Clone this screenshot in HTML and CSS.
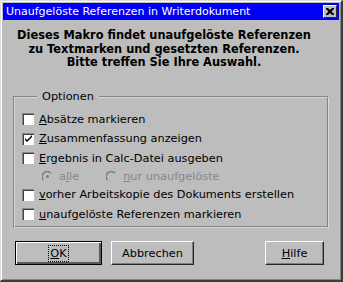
FILE: index.html
```html
<!DOCTYPE html>
<html lang="de">

<head>
    <meta charset="UTF-8">
    <title>Unaufgelöste Referenzen in Writerdokument</title>
    <link rel="stylesheet" href="styles.css">
</head>

<body>

    <div class="fenster">
        <div class="titelleiste">
            <span class="titel">Unaufgelöste Referenzen in Writerdokument</span>
            <span class="schliessen">
                <svg width="8" height="7" viewBox="0 0 8 7">
                    <path d="M0 0h2l2 2 2-2h2v1l-2.5 2.5L8 6v1H6L4 5 2 7H0V6l2.5-2.5L0 1z" fill="#000"/>
                </svg>
            </span>
        </div>

        <p class="hinweis">Dieses Makro findet unaufgelöste Referenzen<br>zu Textmarken und gesetzten Referenzen.<br>Bitte treffen Sie Ihre Auswahl.</p>

        <fieldset class="optionen">
            <legend>Optionen</legend>

            <div class="zeile">
                <span class="kasten"></span>
                <span><u>A</u>bsätze markieren</span>
            </div>
            <div class="zeile">
                <span class="kasten">
                    <svg width="8" height="8" viewBox="0 0 8 8">
                        <path d="M0 3l2 2 5-5v2L2 7 0 5z" fill="#000"/>
                    </svg>
                </span>
                <span><u>Z</u>usammenfassung anzeigen</span>
            </div>
            <div class="zeile">
                <span class="kasten"></span>
                <span><u>E</u>rgebnis in Calc-Datei ausgeben</span>
            </div>
            <div class="zeile radios">
                <span class="radio">
                    <svg width="11" height="11" viewBox="0 0 11 11">
                        <path d="M9 2.2A5 5 0 0 0 1.5 9" fill="none" stroke="#7e7e7e" stroke-width="1.5"/>
                        <circle cx="5.5" cy="5.5" r="1.5" fill="#7e7e7e"/>
                    </svg>
                </span>
                <span class="aus">a<u>l</u>le</span>
                <span class="radio zweite">
                    <svg width="11" height="11" viewBox="0 0 11 11">
                        <path d="M9 2.2A5 5 0 0 0 1.5 9" fill="none" stroke="#7e7e7e" stroke-width="1.5"/>
                    </svg>
                </span>
                <span class="aus"><u>n</u>ur unaufgelöste</span>
            </div>
            <div class="zeile">
                <span class="kasten"></span>
                <span><u>v</u>orher Arbeitskopie des Dokuments erstellen</span>
            </div>
            <div class="zeile">
                <span class="kasten"></span>
                <span><u>u</u>naufgelöste Referenzen markieren</span>
            </div>
        </fieldset>

        <div class="knoepfe">
            <button class="knopf standard"><span class="fokus"><u>O</u>K</span></button>
            <button class="knopf abbrechen">Abbrechen</button>
            <button class="knopf hilfe"><u>H</u>ilfe</button>
        </div>
    </div>

</body>

</html>
```

FILE: styles.css
```css
body {
    margin: 0;
    background-color: #bdbdbd;
}

.fenster {
    box-sizing: border-box;
    width: 343px;
    height: 282px;
    border-top: 1px solid #dcdcdc;
    border-left: 1px solid #dcdcdc;
    border-right: 2px solid #3c3c3c;
    border-bottom: 2px solid #3c3c3c;
    box-shadow: inset 1px 1px 0 #fff, inset -1px -1px 0 #858585;
    background-color: #bdbdbd;
    font-family: "DejaVu Sans", sans-serif;
    font-size: 11.3px;
    color: #000;
}

.titelleiste {
    display: flex;
    align-items: center;
    height: 17px;
    margin: 2px 2px 0 2px;
    padding-left: 3px;
    background-color: #0000f6;
    color: #fff;
    font-size: 11px;
}

.titel {
    flex: 1;
    line-height: 17px;
}

.schliessen {
    box-sizing: border-box;
    display: flex;
    align-items: center;
    justify-content: center;
    width: 14px;
    height: 13px;
    margin-right: 2px;
    background-color: #bdbdbd;
    border-top: 1px solid #fff;
    border-left: 1px solid #fff;
    border-right: 1px solid #2e2e2e;
    border-bottom: 1px solid #2e2e2e;
}

.hinweis {
    margin: 9px 14px 0 0;
    font-weight: bold;
    font-size: 11.4px;
    line-height: 13.5px;
    text-align: center;
}

.optionen {
    box-sizing: border-box;
    width: 316px;
    margin: 20px 0 0 12px;
    padding: 6px 7px 2px 7px;
    border: 2px groove #d8d8d8;
}

.optionen legend {
    margin-left: 15px;
    padding: 0 5px;
    line-height: 14px;
}

.zeile {
    display: flex;
    align-items: center;
    height: 19.5px;
}

.zeile.radios {
    height: 17px;
    padding-left: 20px;
}

.kasten {
    box-sizing: border-box;
    display: flex;
    align-items: center;
    justify-content: center;
    width: 12px;
    height: 12px;
    margin-right: 5px;
    background-color: #fff;
    border-top: 1px solid #868686;
    border-left: 1px solid #868686;
    box-shadow: inset 1px 1px 0 #404040;
}

.radio {
    display: flex;
    width: 11px;
    height: 11px;
    margin-right: 6px;
}

.radio.zweite {
    margin-left: 27px;
}

.aus {
    color: #878787;
}

.knoepfe {
    display: flex;
    margin: 13px 17px 0 14px;
}

.knopf {
    box-sizing: border-box;
    height: 24px;
    padding: 0;
    background-color: #bdbdbd;
    font-family: "DejaVu Sans", sans-serif;
    font-size: 11.3px;
    color: #000;
    border-top: 1px solid #fff;
    border-left: 1px solid #fff;
    border-right: 1px solid #262626;
    border-bottom: 1px solid #262626;
    box-shadow: inset -1px -1px 0 #7e7e7e;
}

.standard {
    width: 87px;
    border: 1px solid #000;
    box-shadow: inset 1px 1px 0 #fff, inset -2px -2px 0 #5a5a5a;
}

.fokus {
    padding: 1px 1px;
    outline: 1px dotted #000;
}

.abbrechen {
    width: 83px;
    margin-left: 9px;
}

.hilfe {
    width: 59px;
    margin-left: auto;
}
```
